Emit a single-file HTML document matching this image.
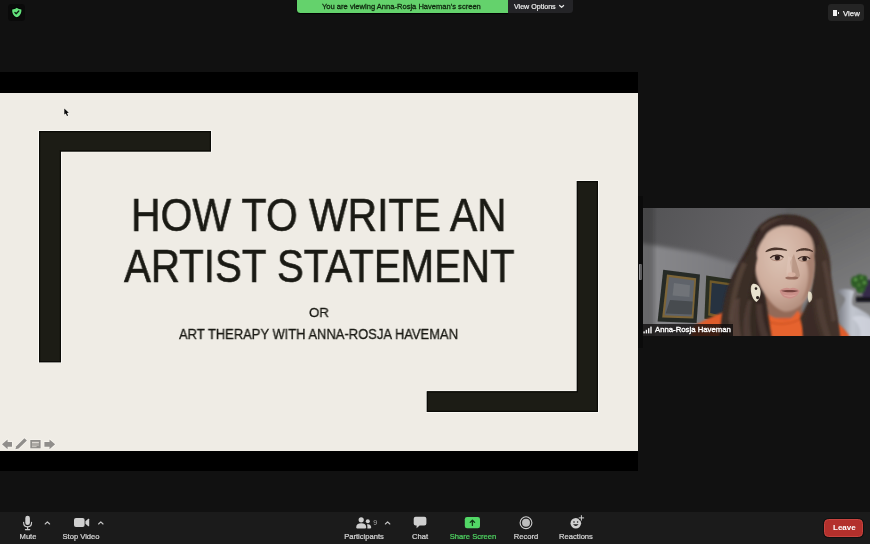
<!DOCTYPE html>
<html><head><meta charset="utf-8">
<style>
*{margin:0;padding:0;box-sizing:border-box}
html,body{width:870px;height:544px;overflow:hidden;background:#111111;font-family:"Liberation Sans",sans-serif;}
.abs{position:absolute}
#band{left:0;top:72px;width:638px;height:399px;background:#000}
#slide{left:0;top:93px;width:638px;height:358px;background:#efece5}
.bk{background:#1c1c15;box-shadow:0 0 0 1px #fbfaf6}
.bk2{background:#1c1c15}
.big{-webkit-text-stroke:0.6px #1a1a14}
.med{-webkit-text-stroke:0.3px #1a1a14}
.t,.lbl{will-change:transform}
.t{white-space:nowrap;transform-origin:0 0;line-height:1}
#toolbar{left:0;top:512px;width:870px;height:32px;background:#1b1b1b}
.lbl{color:#d6d6d6;-webkit-text-stroke:0.22px currentColor;font-size:7.6px;line-height:1;white-space:nowrap;transform:translateX(-50%)}
</style></head><body>
<div class="abs" id="band"></div>
<div class="abs" id="sep" style="left:638px;top:196px;width:5px;height:152px;background:#0b0b0b"></div>
<div class="abs" id="slide"></div>

<!-- brackets -->
<svg class="abs" style="left:0;top:0" width="870" height="544" viewBox="0 0 870 544">
<path d="M39 131H211V151.5H61V362.3H39Z" fill="#1c1c15" stroke="#fdfcf8" stroke-width="1.6" paint-order="stroke"/>
<path d="M39.6 131.6H210.4V150.9H60.4V361.7H39.6Z" fill="none" stroke="#0a0a06" stroke-width="1.2"/>
<path d="M576.8 181H598V412H426.8V391.3H576.8Z" fill="#1c1c15" stroke="#fdfcf8" stroke-width="1.6" paint-order="stroke"/>
<path d="M577.4 181.6H597.4V411.4H427.4V391.9H577.4Z" fill="none" stroke="#0a0a06" stroke-width="1.2"/>
</svg>
<!-- slide text -->
<div class="abs t big" id="t1" style="left:131px;transform:scaleX(0.889);top:192px;font-size:46px;color:#1a1a14">HOW TO WRITE AN</div>
<div class="abs t big" id="t2" style="left:124px;transform:scaleX(0.875);top:243px;font-size:46px;color:#1a1a14">ARTIST STATEMENT</div>
<div class="abs t med" id="t3" style="left:309px;transform:scaleX(0.98);top:306px;font-size:13.5px;color:#1a1a14">OR</div>
<div class="abs t med" id="t4" style="left:179.3px;transform:scaleX(0.926);top:327px;font-size:14px;color:#1a1a14">ART THERAPY WITH ANNA-ROSJA HAVEMAN</div>

<!-- top bar -->
<div class="abs" style="left:297px;top:0;width:211px;height:13px;background:#64d26c;border-bottom-left-radius:3.5px;box-shadow:0 1px 1px #000"></div>
<div class="abs t" id="tv" style="left:322px;top:2.8px;font-size:7.57px;color:#10290f;-webkit-text-stroke:0.3px #10290f">You are viewing Anna-Rosja Haveman's screen</div>
<div class="abs" style="left:508px;top:0;width:65px;height:13.4px;background:#242427;border-bottom-right-radius:3.5px"></div>
<div class="abs t" id="tvo" style="left:513.6px;top:3.5px;font-size:7.1px;color:#ededed;-webkit-text-stroke:0.2px #ededed">View Options</div>

<!-- view button -->
<div class="abs" style="left:828px;top:4.4px;width:36px;height:16.2px;background:#242424;border-radius:3px"></div>
<div class="abs" style="left:833px;top:10px;width:4px;height:6px;background:#f0f0f0"></div>
<div class="abs" style="left:837.6px;top:12px;width:1.8px;height:2px;background:#f0f0f0"></div>
<div class="abs t" id="tview" style="left:842.6px;top:10.2px;font-size:7.8px;color:#ececec;-webkit-text-stroke:0.25px #ececec">View</div>

<!-- toolbar -->
<div class="abs" id="toolbar"></div>
<div class="abs lbl" style="left:27.5px;top:532.5px">Mute</div>
<div class="abs lbl" style="left:81.3px;top:532.5px">Stop Video</div>
<div class="abs lbl" style="left:363.6px;top:532.5px">Participants</div>
<div class="abs lbl" style="left:419.9px;top:532.5px">Chat</div>
<div class="abs lbl" style="left:472.5px;top:532.5px;color:#4fd562">Share Screen</div>
<div class="abs lbl" style="left:526px;top:532.5px">Record</div>
<div class="abs lbl" style="left:576.3px;top:532.5px">Reactions</div>
<div class="abs" style="left:824px;top:519px;width:39px;height:17.5px;background:#b3302c;border:1px solid #c9443f;border-radius:4.5px;box-shadow:0 0 0 1px #101010"></div>
<div class="abs t" id="tleave" style="left:832.6px;top:523.7px;font-size:8px;font-weight:bold;color:#fff">Leave</div>



<!-- webcam -->
<svg class="abs" id="cam" style="left:643px;top:208px" width="227" height="128" viewBox="643 208 227 128">
<defs>
<linearGradient id="bgL" x1="0" y1="0" x2="1" y2="0.25"><stop offset="0" stop-color="#535355"/><stop offset="0.5" stop-color="#636265"/><stop offset="1" stop-color="#5c5c5e"/></linearGradient>
<linearGradient id="wallL" x1="0" y1="0" x2="1" y2="0"><stop offset="0" stop-color="#8a8a8d"/><stop offset="1" stop-color="#77777b"/></linearGradient>
<linearGradient id="wallR" x1="0" y1="0" x2="0.3" y2="1"><stop offset="0" stop-color="#5a5a5b"/><stop offset="0.45" stop-color="#6c6c6d"/><stop offset="1" stop-color="#848486"/></linearGradient>
<radialGradient id="face" cx="0.42" cy="0.35" r="0.75"><stop offset="0" stop-color="#dcc3b4"/><stop offset="0.55" stop-color="#cfae9e"/><stop offset="1" stop-color="#a98372"/></radialGradient>
<linearGradient id="hair" x1="0" y1="0" x2="1" y2="0"><stop offset="0" stop-color="#3a2d29"/><stop offset="0.5" stop-color="#33261f"/><stop offset="1" stop-color="#4a3a31"/></linearGradient>
<linearGradient id="vase" x1="0" y1="0" x2="1" y2="0"><stop offset="0" stop-color="#74767e"/><stop offset="0.4" stop-color="#c2c6cf"/><stop offset="1" stop-color="#aeb2bc"/></linearGradient>
<filter id="b1" x="-10%" y="-10%" width="120%" height="120%"><feGaussianBlur stdDeviation="0.9"/></filter>
<filter id="b2" x="-20%" y="-20%" width="140%" height="140%"><feGaussianBlur stdDeviation="2.2"/></filter>
<filter id="b05" x="-10%" y="-10%" width="120%" height="120%"><feGaussianBlur stdDeviation="0.55"/></filter>
<clipPath id="cc"><rect x="643" y="208" width="227" height="128"/></clipPath>
</defs>
<g clip-path="url(#cc)">
<rect x="643" y="208" width="227" height="128" fill="url(#bgL)"/>
<rect x="786" y="200" width="90" height="140" fill="url(#wallR)" filter="url(#b2)"/>
<!-- wall lower left -->
<path d="M640 243 L700 253 L745 266 L745 340 L640 340Z" fill="url(#wallL)" filter="url(#b2)"/>
<!-- frame 1 -->
<g filter="url(#b05)">
<path d="M663.2 269.7 L700 274.6 L696.6 323 L657.6 321.6Z" fill="#262b27"/>
<path d="M667 274.5 L696.2 278.3 L693.4 318.6 L662.2 317.4Z" fill="#7d6538"/>
<path d="M669 277 L694.2 280.4 L691.6 316.4 L664.6 315.2Z" fill="#5f646a"/>
<path d="M670 300 L692.6 301.6 L691.8 314.6 L665.6 313.4Z" fill="#474b4f"/>
<path d="M674 283 L690 285.2 L689.4 297 L672.6 295.4Z" fill="#6f7378"/>
<!-- frame 2 -->
<path d="M706.2 275.6 L740 280.4 L740 324 L704.4 318.7Z" fill="#2b2e22"/>
<path d="M709.8 280.2 L740 284.4 L740 322 L708.2 315.4Z" fill="#6f5a2c"/>
<path d="M711.8 283 L740 286.8 L740 320 L710.2 313Z" fill="#253040"/>
</g>
<rect x="640" y="205" width="14" height="135" fill="#2a2a2c" opacity="0.35" filter="url(#b2)"/>
<!-- vase -->
<g filter="url(#b1)">
<path d="M836.8 291 C840 288 850 288.4 854.6 291 C853 296 851.4 300 852.4 305 C858 309 872 314 874 322 L874 340 L846 340 C846 330 838 322 838.6 314 C839.6 307 846 303 845 298 C843 295 839 293.6 836.8 291Z" fill="url(#vase)"/>
<path d="M852 318 C858 322 862 330 860 338 L872 338 L872 320 C866 316 858 314 852 318Z" fill="#d5d9e2" opacity="0.7"/>
<!-- shelf + purple object -->
<rect x="856" y="296.6" width="16" height="5.4" fill="#17151c"/>
<path d="M863 281 C865 279.4 868 279.6 872 280 L872 297 L862.4 297Z" fill="#352c49"/>
<!-- plant -->
<path d="M851 282 C850.6 278 853 275.6 856 276.4 C857 274 861 273.6 862.6 275.6 C865.6 274.6 868 277 867 280 C869 283 867.6 286 865.4 286.6 C866 290 863.4 293.6 860.6 293 C857.6 293.6 855.6 290.6 856 288 C853 288 850.6 285 851 282Z" fill="#2f5c26"/>
<circle cx="855.6" cy="279.6" r="1.7" fill="#5c9a48"/><circle cx="861.6" cy="277.8" r="1.5" fill="#4f8a3c"/><circle cx="864.4" cy="282.6" r="1.6" fill="#5a9646"/><circle cx="859" cy="285" r="1.6" fill="#487f38"/><circle cx="861.6" cy="290" r="1.3" fill="#407434"/>
</g>
<!-- sweater shoulders -->
<g filter="url(#b1)">
<path d="M694 326 C704 321 714 315 724 312.6 L760 310 L800 312 L834 321.6 C842 326 848 332 851 340 L690 340Z" fill="#df5c2b"/>
<!-- neck -->
<path d="M764 292 L802 292 L802 318 L764 318Z" fill="#936a58"/>
<!-- turtleneck -->
<path d="M763.6 311.6 C770 317 780 320.4 786 320.2 C791 319.6 795 315 797.6 310.6 L804 320 L806 340 L760 340Z" fill="#e6632f"/>
<path d="M765 320 C775 325.6 790 325 800 319" stroke="#c94f22" stroke-width="1.4" fill="none"/>
</g>
<!-- hair back -->
<g filter="url(#b1)">
<path d="M789 214.6 C772 213.4 757 224 751 240 C744 256 735 266 730 281 C724 296 722 312 719.4 340 L772 340 L766 300 L757 262 L766 234 L808 232 L815 262 L811 296 L800 318 L806 340 L840 340 C839 328 837.6 316 836 307 C834 294 832 284 831 274 C831 262 829.6 254 827 248 C824 237 818 227 811 221 C805 217 798 215 789 214.6Z" fill="url(#hair)"/>
</g>
<!-- face -->
<g filter="url(#b1)">
<path d="M764 238 C767 231 776 226 786 225.6 C796 225.6 806 229 811 237 C814.6 244 815.6 256 814.8 268 C814 280 811 292 805 301 C799 308 792 311.8 785.7 311.8 C779 311 772 305 767 297 C760 288 755 278 755 266 C755 254 759 244 764 238Z" fill="url(#face)"/>
<!-- right side shadow -->
<path d="M806 262 C810 270 809 288 801 302 C808 296 813 284 814.4 270 C815 262 814.6 254 813 248 C812 254 808 258 806 262Z" fill="#9c7664" opacity="0.75"/>
<!-- hair over forehead -->
<path d="M755 268 C752 252 755 236 763 228 C770 221 780 216.6 789 216.6 C800 216.6 811 222 817 232 C821 242 820 256 815.4 266 C816.4 252 815 243 811 237 C806 229 796 225.6 786 225.6 C776 226 767 231 764 238 C759 244 755 254 755 268Z" fill="#3a2c26"/>
</g>
<g filter="url(#b05)">
<!-- eyebrows -->
<path d="M766 251.6 C770 247.6 778 246.8 786.6 250.2 C779 248.8 771 249.4 766 251.6Z" fill="#4a342a" stroke="#4a342a" stroke-width="1.1" stroke-linejoin="round"/>
<path d="M796.4 251.2 C801 247.6 808 247.8 812.8 251.4 C808 249.6 801 249.6 796.4 251.2Z" fill="#4a342a" stroke="#4a342a" stroke-width="1" stroke-linejoin="round"/>
<!-- eyes -->
<ellipse cx="776.8" cy="258" rx="6.4" ry="3.2" fill="#b08b7b"/>
<ellipse cx="804" cy="259" rx="5.8" ry="3" fill="#a58170"/>
<path d="M770.8 258.2 C773.6 255.2 780 255 783 258 C780 260.6 774 260.8 770.8 258.2Z" fill="#cdb5a8"/>
<path d="M798.6 259.2 C801.4 256.4 806.8 256.4 809.6 259.2 C806.8 261.4 801.4 261.6 798.6 259.2Z" fill="#c2a99c"/>
<ellipse cx="777.4" cy="257.9" rx="2.6" ry="2.3" fill="#2e1f1a"/>
<ellipse cx="804.6" cy="258.9" rx="2.4" ry="2.2" fill="#2e1f1a"/>
<path d="M770.2 257.8 C773.6 254.4 780 254.2 783.6 257.4" stroke="#3a2822" stroke-width="1.2" fill="none"/>
<path d="M798 258.8 C801.4 255.8 807 255.6 810.2 258.8" stroke="#3a2822" stroke-width="1.1" fill="none"/>
<!-- nose -->
<path d="M794 254 C796 262 799.4 270 800 275.6 C799 279 796 279.6 793 279 L790 262Z" fill="#b18b7a" opacity="0.7"/>
<path d="M788 256 C787.4 264 786 270 786.6 275.4 L792 276 L792.4 258Z" fill="#e3cbbd" opacity="0.4"/>
<ellipse cx="791.8" cy="278" rx="6.6" ry="1.6" fill="#8f6253" opacity="0.85"/>
<ellipse cx="791.6" cy="274.6" rx="4" ry="2.4" fill="#d8b3a3" opacity="0.9"/>
<!-- mouth -->
<path d="M779.6 290.6 C783 287.6 787.6 287.2 790 288.4 C792.6 287.2 796.6 287.8 799.8 290.8 C797.6 296.8 792.6 298.8 788.8 298.6 C784.4 298.4 780.8 295.4 779.6 290.6Z" fill="#c98f88"/>
<path d="M781 290.8 C786 292.8 793.6 292.8 798.6 291 C795 289.6 785 289.6 781 290.8Z" fill="#74423e"/>
<path d="M783 294.6 C786 297.4 793 297.4 796.6 294.4 C793 295.8 787 295.8 783 294.6Z" fill="#d9a49c"/>
<!-- earrings -->
<path d="M752.6 284 C756 283 760 286 760.6 291 C761 296 759 300 756.4 302 C753 300 751 294 750.8 290 C750.6 287 751 285 752.6 284Z" fill="#e9e3cf"/>
<circle cx="756" cy="288.6" r="1.3" fill="#2a211d"/><circle cx="757.6" cy="297.6" r="1.6" fill="#2a211d"/>
<path d="M808.4 291.6 C811 291 812.6 294 812.4 297.6 C812 300.6 810.6 302.4 809 302.4 C807.6 300 807.4 295 808.4 291.6Z" fill="#e4dcc6"/>
</g>
<!-- hair front strands -->
<g filter="url(#b1)">
<path d="M757.2 258 C754 270 752 280 750.6 284 C748 296 746 312 748 340 L722 340 C722 318 726 298 732 282 C738 268 748 258 753 246Z" fill="#3b2d27"/>
<path d="M814.8 256 C818 270 816 282 813 292 C812 304 814 320 820 340 L840 340 C838 322 834 304 830 284 C829 266 824 252 818 244Z" fill="#42332b"/>
<path d="M812 300 C806 312 802 324 803 340 L822 340 C816 326 813 312 812 300Z" fill="#3a2c25"/>
<path d="M742 262 C736 276 730 296 728 320 L733 322 C735 300 740 280 747 264Z" fill="#5a463c" opacity="0.75"/>
<path d="M748 300 C744 312 742 326 744 340 L752 340 C749 326 750 312 752 300Z" fill="#55423a" opacity="0.7"/>
<path d="M822 262 C826 280 828 300 832 322 L836 320 C833 300 831 280 826 260Z" fill="#5a473d" opacity="0.7"/>
<path d="M760 228 C766 221 776 217.6 786 217.4 C778 219.6 768 224 762 232Z" fill="#54413a" opacity="0.8"/>
<path d="M734 300 C730 312 728 326 729 340 L742 340 C739 326 738 312 740 298Z" fill="#5c493f" opacity="0.7"/>
<path d="M756 304 C756 316 758 328 762 340 L770 340 C765 328 762 316 762 304Z" fill="#54423a" opacity="0.65"/>
<path d="M816 300 C817 314 821 328 826 340 L832 340 C827 326 823 312 822 298Z" fill="#58463c" opacity="0.6"/>
</g>
</g>
</svg>
<!-- name label -->
<div class="abs" style="left:643px;top:324.4px;width:90px;height:11.6px;background:rgba(14,12,12,0.78)"></div>
<svg class="abs" style="left:643px;top:326px" width="10" height="8" viewBox="0 0 10 8"><g fill="#f2f2f2"><rect x="0.4" y="5.4" width="1.4" height="2"/><rect x="2.7" y="3.8" width="1.4" height="3.6"/><rect x="5" y="2.2" width="1.4" height="5.2"/><rect x="7.3" y="0.6" width="1.4" height="6.8"/></g></svg>
<div class="abs t" id="tname" style="left:654.7px;top:326.2px;font-size:7.75px;color:#fff;-webkit-text-stroke:0.35px #fff">Anna-Rosja Haveman</div>
<!-- drag handle -->
<div class="abs" style="left:639.2px;top:264px;width:2.6px;height:16px;background:#5a5a5c;border-radius:1px;box-shadow:inset 1px 0 0 #8b8b8d"></div>

<!-- icons -->
<svg class="abs" id="icons" style="left:0;top:0" width="870" height="544" viewBox="0 0 870 544">
<!-- shield badge -->
<rect x="8" y="4" width="17" height="17" rx="3.5" fill="#0a0a0a"/>
<path d="M16.8 7.8 C15.4 8.9 13.8 9.3 12.2 9.4 C12 12.8 13 15.6 16.8 17.3 C20.6 15.6 21.6 12.8 21.4 9.4 C19.8 9.3 18.2 8.9 16.8 7.8Z" fill="#63e27c" stroke="#000" stroke-width="1.4" paint-order="stroke"/>
<path d="M14.9 12.5 L16.2 13.8 L18.8 11" fill="none" stroke="#0d1a10" stroke-width="1.3" stroke-linecap="round" stroke-linejoin="round"/>
<!-- view options caret -->
<path d="M559.6 5.5 L561.6 7.4 L563.6 5.5" fill="none" stroke="#e6e6e6" stroke-width="1.2" stroke-linecap="round" stroke-linejoin="round"/>

<!-- mic -->
<g fill="none" stroke="#cfcfcf" stroke-width="1.1" stroke-linecap="round">
<rect x="25.3" y="515.8" width="4.6" height="9.2" rx="2.3" fill="#cfcfcf" stroke="none"/>
<path d="M23.6 522.2 C23.6 528.4 31.6 528.4 31.6 522.2"/>
<path d="M27.6 527 V529.4 M25.4 529.6 H29.8"/>
</g>
<!-- carets -->
<g fill="none" stroke="#c4c4c4" stroke-width="1.15" stroke-linecap="round" stroke-linejoin="round">
<path d="M45.2 524 L47.4 521.8 L49.6 524"/>
<path d="M98.6 524 L100.8 521.8 L103 524"/>
<path d="M385.4 524 L387.6 521.8 L389.8 524"/>
</g>
<!-- camera -->
<rect x="74" y="518" width="10.6" height="9" rx="2" fill="#cfcfcf"/>
<path d="M85.4 521.3 L88.3 518.8 Q89.2 518.3 89.2 519.3 V525.7 Q89.2 526.7 88.3 526.2 L85.4 523.7Z" fill="#cfcfcf"/>
<!-- participants -->
<g fill="#cfcfcf">
<circle cx="361.2" cy="519.8" r="2.6"/>
<path d="M356.2 527.6 C356.2 524.4 358 523.2 361.2 523.2 C364.4 523.2 366.2 524.4 366.2 527.6 Q366.2 528.4 365.4 528.4 H357 Q356.2 528.4 356.2 527.6Z"/>
<circle cx="367.8" cy="521.2" r="2"/>
<path d="M367 524.4 C369.8 524 371.2 525.4 371.2 527.6 Q371.2 528.4 370.4 528.4 H367.4 Q367.6 526 367 524.4Z"/>
</g>
<text x="373.2" y="525.4" font-family="Liberation Sans, sans-serif" font-size="7" fill="#a8a8a8">9</text>
<!-- chat -->
<path d="M415.7 516.7 H424.4 Q426.4 516.7 426.4 518.7 V523.6 Q426.4 525.6 424.4 525.6 H419.6 L416.6 528.2 V525.6 H415.7 Q413.7 525.6 413.7 523.6 V518.7 Q413.7 516.7 415.7 516.7Z" fill="#cfcfcf"/>
<!-- share screen -->
<rect x="464.8" y="517" width="15.2" height="11.2" rx="2.2" fill="#52d766"/>
<path d="M472.4 525.4 V520.4 M470.2 522.4 L472.4 520.2 L474.6 522.4" fill="none" stroke="#123a18" stroke-width="1.3" stroke-linecap="round" stroke-linejoin="round"/>
<!-- record -->
<circle cx="526" cy="522.7" r="5.9" fill="none" stroke="#cfcfcf" stroke-width="1.1"/>
<circle cx="526" cy="522.7" r="4" fill="#bdbdbd"/>
<!-- reactions -->
<circle cx="575.8" cy="523.2" r="5.3" fill="#cfcfcf"/>
<circle cx="574" cy="522" r="0.8" fill="#1b1b1b"/><circle cx="577.6" cy="522" r="0.8" fill="#1b1b1b"/>
<path d="M573 524.2 Q575.8 527.6 578.6 524.2Z" fill="#1b1b1b"/>
<circle cx="581.2" cy="518" r="2.6" fill="#1b1b1b"/>
<path d="M581.4 515.6 V520.2 M579.1 517.9 H583.7" stroke="#cfcfcf" stroke-width="1" stroke-linecap="round"/>

<!-- slide nav icons -->
<g opacity="0.95">
<g stroke="#f6f4ee" stroke-width="1.6" paint-order="stroke" fill="#8b8986" stroke-linejoin="round">
<path d="M2 444.3 L7.6 439.4 V441.9 H12 V446.7 H7.6 V449.2Z"/>
<path d="M55.1 444.3 L49.5 439.4 V441.9 H44.4 V446.7 H49.5 V449.2Z"/>
<path d="M15.4 449.3 L16.3 446.2 L24.4 438.2 L26.9 440.6 L18.6 448.5Z"/>
<rect x="30.3" y="440" width="10.3" height="8.3"/>
</g>
<rect x="32" y="441.8" width="6.9" height="1.6" fill="#dcd9d3"/>
<rect x="32" y="444.6" width="6.9" height="0.9" fill="#cfccc6"/>
<rect x="32" y="446.2" width="4.6" height="0.9" fill="#cfccc6"/>
</g>
<!-- cursor -->
<path d="M64.3 108.6 L64.3 114.6 L65.8 113.4 L67 116 L68.1 115.5 L66.9 113 L68.8 112.8Z" fill="#0a0a0a" stroke="#fbfaf6" stroke-width="0.9" paint-order="stroke" stroke-linejoin="round"/>
</svg>
</body></html>
